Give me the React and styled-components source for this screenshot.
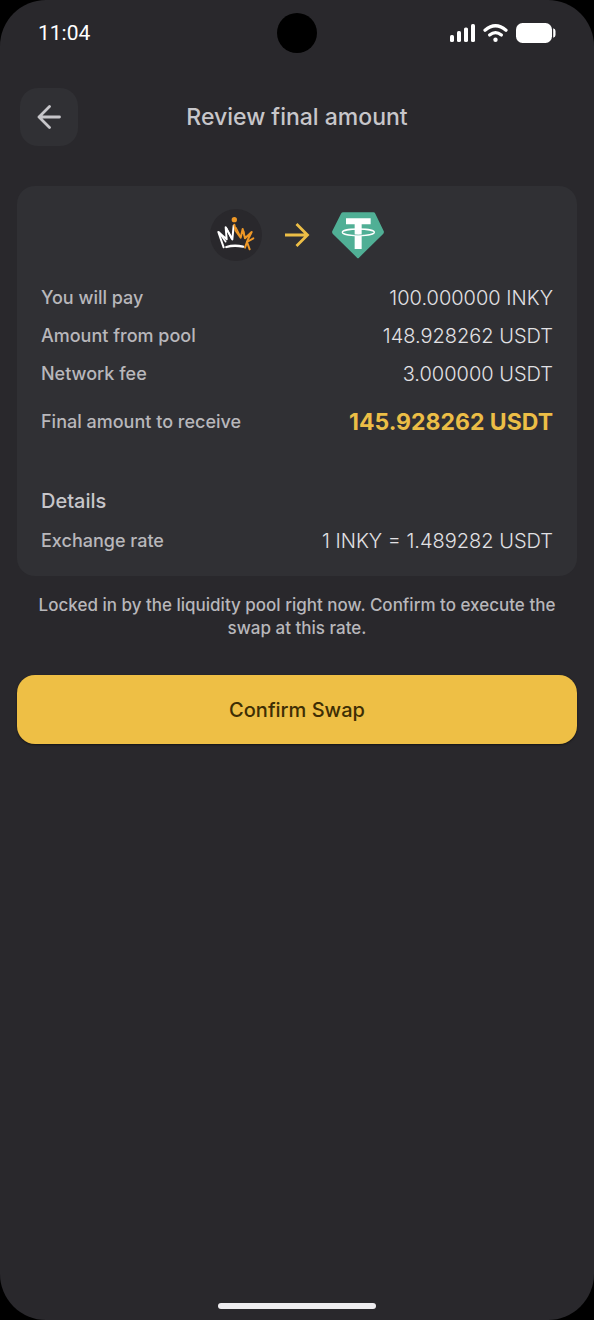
import React from "react";
import styled, { createGlobalStyle } from "styled-components";

const GlobalStyle = createGlobalStyle`
  *, *::before, *::after { box-sizing: border-box; }
  body {
    margin: 0;
    background: #000;
    color: #c7c6ca;
    font-family: Inter, "Liberation Sans", sans-serif;
  }
`;

const Screen = styled.div`
  min-height: 100vh;
  display: flex;
  flex-direction: column;
  background: #29282c;
  border-radius: 46px;
`;

const StatusBar = styled.div`
  display: grid;
  grid-template-columns: 1fr auto 1fr;
  align-items: center;
  padding: 13px 38px 0;
`;

const Time = styled.time`
  font-family: Roboto, sans-serif;
  font-size: 21px;
  line-height: 24px;
  color: #fff;
`;

const Camera = styled.div`
  width: 40px;
  height: 40px;
  border-radius: 50%;
  background: #000;
`;

const StatusIcons = styled.div`
  display: flex;
  align-items: center;
  justify-content: flex-end;
  gap: 8px;

  svg { display: block; }
`;

const Header = styled.header`
  display: grid;
  grid-template-columns: 58px 1fr 58px;
  align-items: center;
  padding: 35px 20px 0;
`;

const BackButton = styled.button`
  display: flex;
  align-items: center;
  justify-content: center;
  width: 58px;
  height: 58px;
  padding: 0;
  border: 0;
  border-radius: 18px;
  background: #303034;
  color: #c7c6ca;
`;

const Title = styled.h1`
  margin: 0;
  text-align: center;
  font-size: 23px;
  line-height: 32px;
  font-weight: 500;
`;

const Main = styled.main`
  flex: 1;
  padding: 40px 17px 0;
`;

const Card = styled.section`
  padding: 23px 24px 16px;
  border-radius: 18px;
  background: #303034;
`;

const Pair = styled.div`
  display: flex;
  align-items: center;
  justify-content: center;
  gap: 22px;
  margin-bottom: 18px;

  svg { display: block; }
`;

const Rows = styled.dl`
  margin: 0;
`;

const Row = styled.div`
  display: flex;
  align-items: center;
  justify-content: space-between;
  min-height: ${(p) => (p.$total ? 58 : 38)}px;
`;

const Label = styled.dt`
  font-size: 18px;
  line-height: 24px;
  font-weight: 500;
  color: #b8b7bb;
`;

const Value = styled.dd`
  margin: 0;
  font-size: ${(p) => (p.$total ? 23 : 20)}px;
  line-height: 28px;
  font-weight: ${(p) => (p.$total ? 700 : 300)};
  color: ${(p) => (p.$total ? "#ecbe46" : "#e2e1e4")};
`;

const SectionTitle = styled.h2`
  margin: 30px 0 1px;
  font-size: 20px;
  line-height: 40px;
  font-weight: 500;
`;

const Note = styled.p`
  margin: 18px 16px 35px;
  text-align: center;
  font-size: 17px;
  line-height: 23px;
  font-weight: 500;
  color: #b8b7bb;
`;

const ConfirmButton = styled.button`
  display: block;
  width: 100%;
  height: 69px;
  border: 0;
  border-radius: 18px;
  background: #eebf45;
  box-shadow: 0 1px 2px rgba(0, 0, 0, 0.5);
  color: #3e2e04;
  font-family: inherit;
  font-size: 20px;
  line-height: 28px;
  font-weight: 500;
`;

const HomeIndicator = styled.div`
  align-self: center;
  width: 158px;
  height: 6px;
  margin-bottom: 11px;
  border-radius: 3px;
  background: #eeedf0;
`;

const SignalIcon = () => (
  <svg width="25" height="18" viewBox="0 0 25 18" fill="#fff" aria-hidden="true">
    <rect x="0" y="11" width="4" height="7" rx="1.6" />
    <rect x="7" y="7" width="4" height="11" rx="1.6" />
    <rect x="14" y="3.5" width="4" height="14.5" rx="1.6" />
    <rect x="21" y="0" width="4" height="18" rx="1.6" />
  </svg>
);

const WifiIcon = () => (
  <svg width="25" height="18" viewBox="0 0 25 18" fill="none" stroke="#fff" strokeWidth="3.2" strokeLinecap="round" aria-hidden="true">
    <path d="M2 6.3Q12.5-2.8 23 6.3" />
    <path d="M6.6 11Q12.5 6.2 18.4 11" />
    <circle cx="12.5" cy="15.8" r="2.2" fill="#fff" stroke="none" />
  </svg>
);

const BatteryIcon = () => (
  <svg width="40" height="20" viewBox="0 0 40 20" fill="#fff" aria-hidden="true">
    <rect width="36" height="20" rx="6.5" />
    <path d="M37.2 5.3q2.3.4 2.3 2.7v4q0 2.3-2.3 2.7z" />
  </svg>
);

const BackArrow = () => (
  <svg width="24" height="24" viewBox="0 0 24 24" fill="none" stroke="currentColor" strokeWidth="2.8" strokeLinecap="round" strokeLinejoin="round" aria-hidden="true">
    <path d="M22.5 12H2M12.5 1.5 2 12l10.500 10.500" />
  </svg>
);

const SwapArrow = () => (
  <svg width="26" height="26" viewBox="0 0 26 26" fill="none" stroke="#ecbe46" strokeWidth="2.8" aria-hidden="true">
    <path d="M1 13H23M12.500 2 23.500 13 12.500 24" />
  </svg>
);

const InkyLogo = () => (
  <svg width="52" height="52" viewBox="0 0 156 156" fill="none" strokeLinecap="round" strokeLinejoin="round" role="img" aria-label="INKY">
    <circle cx="78" cy="78" r="78" fill="#29282c" />
    <g stroke="#fff" strokeWidth="6">
      <path d="M41 115 25 69 50 91 47 55 67 91 71 50" />
      <path d="M27 70 47 98M49 57 65 89" strokeWidth="5" />
      <path d="M49 114Q73 107 99 113" strokeWidth="7" />
    </g>
    <g stroke="#ee9826" strokeWidth="6">
      <circle cx="73" cy="32" r="8" fill="#ee9826" stroke="none" />
      <path d="M73 47 77 65 92 86 98 60 105 88 125 69 113 93 105 116" />
      <path d="M78 56 91 82M101 66 105 88" strokeWidth="4" />
      <path d="M130 88 111 99 119 121" />
    </g>
  </svg>
);

const TetherLogo = () => (
  <svg width="52" height="52" viewBox="0 0 156 156" role="img" aria-label="USDT">
    <path d="M34 10H124Q128 10 130 14L155 66Q157 70 154 74L81 146Q78 149 75 146L2 74Q-1 70 1 66L27 14Q29 10 34 10Z" fill="#50af95" />
    <ellipse cx="79" cy="70" rx="48" ry="10" fill="none" stroke="#fff" strokeWidth="4" />
    <path d="M42 28H116V46H89V120H68V46H42Z" fill="#fff" />
    <path d="M65 77Q79 79 92 77" fill="none" stroke="#50af95" strokeWidth="2" />
  </svg>
);

const payment = [
  { label: "You will pay", value: "100.000000 INKY" },
  { label: "Amount from pool", value: "148.928262 USDT" },
  { label: "Network fee", value: "3.000000 USDT" },
  { label: "Final amount to receive", value: "145.928262 USDT", total: true },
];

const details = [{ label: "Exchange rate", value: "1 INKY = 1.489282 USDT" }];

const AmountRows = ({ items }) => (
  <Rows>
    {items.map(({ label, value, total }) => (
      <Row key={label} $total={total}>
        <Label>{label}</Label>
        <Value $total={total}>{value}</Value>
      </Row>
    ))}
  </Rows>
);

export default function App() {
  return (
    <>
      <GlobalStyle />
      <Screen>
        <StatusBar>
          <Time>11:04</Time>
          <Camera />
          <StatusIcons>
            <SignalIcon />
            <WifiIcon />
            <BatteryIcon />
          </StatusIcons>
        </StatusBar>
        <Header>
          <BackButton type="button" aria-label="Back">
            <BackArrow />
          </BackButton>
          <Title>Review final amount</Title>
        </Header>
        <Main>
          <Card>
            <Pair>
              <InkyLogo />
              <SwapArrow />
              <TetherLogo />
            </Pair>
            <AmountRows items={payment} />
            <SectionTitle>Details</SectionTitle>
            <AmountRows items={details} />
          </Card>
          <Note>
            Locked in by the liquidity pool right now. Confirm to execute the
            swap at this rate.
          </Note>
          <ConfirmButton type="button">Confirm Swap</ConfirmButton>
        </Main>
        <HomeIndicator />
      </Screen>
    </>
  );
}
